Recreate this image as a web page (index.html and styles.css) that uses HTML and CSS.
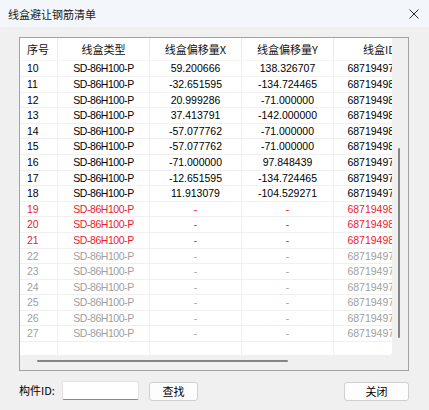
FILE: index.html
```html
<!DOCTYPE html>
<html lang="zh-CN">
<head>
<meta charset="utf-8">
<title>线盒避让钢筋清单</title>
<link rel="stylesheet" href="styles.css">
</head>
<body>
<div class="window">
  <div class="titlebar">
    <span class="title">线盒避让钢筋清单</span>
    <svg class="close" width="10" height="10" viewBox="0 0 10 10"><path d="M0.5 0.5 L9.5 9.5 M9.5 0.5 L0.5 9.5" stroke="#2b2b2b" stroke-width="1" fill="none"/></svg>
  </div>
  <div class="main">
    <div class="frame">
      <div class="data">
        <div class="row head">
          <div class="c left">序号</div><div class="c">线盒类型</div><div class="c">线盒偏移量X</div><div class="c">线盒偏移量Y</div><div class="c">线盒ID</div>
        </div>
        <div class="row"><div class="c left">10</div><div class="c t">SD-86H100-P</div><div class="c">59.200666</div><div class="c">138.326707</div><div class="c">68719497812</div></div>
        <div class="row"><div class="c left">11</div><div class="c t">SD-86H100-P</div><div class="c">-32.651595</div><div class="c">-134.724465</div><div class="c">68719498012</div></div>
        <div class="row"><div class="c left">12</div><div class="c t">SD-86H100-P</div><div class="c">20.999286</div><div class="c">-71.000000</div><div class="c">68719498134</div></div>
        <div class="row"><div class="c left">13</div><div class="c t">SD-86H100-P</div><div class="c">37.413791</div><div class="c">-142.000000</div><div class="c">68719498256</div></div>
        <div class="row"><div class="c left">14</div><div class="c t">SD-86H100-P</div><div class="c">-57.077762</div><div class="c">-71.000000</div><div class="c">68719498378</div></div>
        <div class="row"><div class="c left">15</div><div class="c t">SD-86H100-P</div><div class="c">-57.077762</div><div class="c">-71.000000</div><div class="c">68719498390</div></div>
        <div class="row"><div class="c left">16</div><div class="c t">SD-86H100-P</div><div class="c">-71.000000</div><div class="c">97.848439</div><div class="c">68719497701</div></div>
        <div class="row"><div class="c left">17</div><div class="c t">SD-86H100-P</div><div class="c">-12.651595</div><div class="c">-134.724465</div><div class="c">68719497723</div></div>
        <div class="row"><div class="c left">18</div><div class="c t">SD-86H100-P</div><div class="c">11.913079</div><div class="c">-104.529271</div><div class="c">68719497745</div></div>
        <div class="row red"><div class="c left">19</div><div class="c t">SD-86H100-P</div><div class="c">-</div><div class="c">-</div><div class="c">68719498512</div></div>
        <div class="row red"><div class="c left">20</div><div class="c t">SD-86H100-P</div><div class="c">-</div><div class="c">-</div><div class="c">68719498534</div></div>
        <div class="row red"><div class="c left">21</div><div class="c t">SD-86H100-P</div><div class="c">-</div><div class="c">-</div><div class="c">68719498556</div></div>
        <div class="row grey"><div class="c left">22</div><div class="c t">SD-86H100-P</div><div class="c">-</div><div class="c">-</div><div class="c">68719497912</div></div>
        <div class="row grey"><div class="c left">23</div><div class="c t">SD-86H100-P</div><div class="c">-</div><div class="c">-</div><div class="c">68719497934</div></div>
        <div class="row grey"><div class="c left">24</div><div class="c t">SD-86H100-P</div><div class="c">-</div><div class="c">-</div><div class="c">68719497956</div></div>
        <div class="row grey"><div class="c left">25</div><div class="c t">SD-86H100-P</div><div class="c">-</div><div class="c">-</div><div class="c">68719497978</div></div>
        <div class="row grey"><div class="c left">26</div><div class="c t">SD-86H100-P</div><div class="c">-</div><div class="c">-</div><div class="c">68719497990</div></div>
        <div class="row grey"><div class="c left">27</div><div class="c t">SD-86H100-P</div><div class="c">-</div><div class="c">-</div><div class="c">68719497999</div></div>
        <div class="row filler"><div class="c"></div><div class="c"></div><div class="c"></div><div class="c"></div><div class="c"></div></div>
      </div>
      <div class="vscroll"><div class="vthumb"></div></div>
      <div class="hscroll"><div class="hthumb"></div></div>
      <div class="corner"></div>
    </div>
    <div class="bottom">
      <span class="label">构件ID:</span>
      <div class="input"></div>
      <button class="btn find">查找</button>
      <div class="spacer"></div>
      <button class="btn closebtn">关闭</button>
    </div>
  </div>
</div>
</body>
</html>
```

FILE: styles.css
```css
html, body {
  margin: 0;
  padding: 0;
}
body {
  width: 429px;
  height: 410px;
  overflow: hidden;
  background: #f0f0f0;
  font-family: "Noto Sans CJK SC", "Liberation Sans", sans-serif;
  color: #000;
}
.window {
  width: 429px;
  height: 410px;
  display: flex;
  flex-direction: column;
}
.titlebar {
  height: 27px;
  flex: none;
  background: #f3f6fa;
  display: flex;
  align-items: center;
  padding: 0 10px 0 8px;
}
.title {
  font-size: 11px;
  color: #1a1a1a;
  flex: 1;
  line-height: 14px;
}
.close {
  display: block;
}
.main {
  padding: 10px 20px 0 19px;
  display: flex;
  flex-direction: column;
}
.frame {
  width: 390px;
  height: 334px;
  box-sizing: border-box;
  border: 1px solid #a3a3a3;
  display: grid;
  grid-template-columns: 372px 16px;
  grid-template-rows: 317px 15px;
  background: #f0f0f0;
}
.data {
  background: #fff;
  overflow: hidden;
  display: flex;
  flex-direction: column;
  border-bottom-right-radius: 3px;
}
.row {
  display: grid;
  grid-template-columns: 38px 92px 92px 92px 92px;
  width: 406px;
  height: 15.6px;
  flex: none;
  box-sizing: border-box;
  border-bottom: 1px solid #f0f0f0;
  font-family: "Liberation Sans", Arial, sans-serif;
  font-size: 10.5px;
  line-height: 15px;
}
.row.head {
  height: 23.4px;
  font-family: "Noto Sans CJK SC", sans-serif;
  font-size: 11px;
  line-height: 22px;
  color: #111;
  border-bottom: 1px solid #f4f4f4;
}
.row.filler {
  flex: 1;
  height: auto;
  border-bottom: none;
}
.c {
  border-right: 1px solid #f0f0f0;
  text-align: center;
  white-space: nowrap;
  overflow: hidden;
}
.c.t {
  letter-spacing: -0.45px;
}
.head .c {
  border-right-color: #e8e8e8;
}
.c.left {
  text-align: left;
  padding-left: 7px;
}
.red {
  color: #ec1b2e;
}
.grey {
  color: #a0a0a0;
}
.vscroll {
  position: relative;
  background: #f0f0f0;
}
.vthumb {
  position: absolute;
  left: 6px;
  top: 110px;
  width: 2px;
  height: 190px;
  border-radius: 1px;
  background: #858585;
}
.hscroll {
  position: relative;
  background: #f0f0f0;
}
.hthumb {
  position: absolute;
  left: 17px;
  top: 5px;
  width: 251px;
  height: 2px;
  border-radius: 1px;
  background: #858585;
}
.corner {
  background: #f0f0f0;
}
.bottom {
  display: flex;
  align-items: center;
  margin-top: 9px;
  height: 20px;
}
.label {
  font-size: 11px;
  width: 43px;
  flex: none;
  color: #000;
}
.input {
  width: 77px;
  height: 19px;
  box-sizing: border-box;
  background: #fff;
  border: 1px solid #e3e3e3;
  border-bottom-color: #8a8a8a;
  border-radius: 2px;
  flex: none;
}
.btn {
  height: 19px;
  margin-top: 2px;
  box-sizing: border-box;
  background: #fdfdfd;
  border: 1px solid #d0d0d0;
  border-radius: 3px;
  font-family: "Noto Sans CJK SC", sans-serif;
  font-size: 11px;
  line-height: 16px;
  padding: 0;
  color: #000;
  flex: none;
}
.find {
  width: 49px;
  margin-left: 10px;
}
.spacer {
  flex: 1;
}
.closebtn {
  width: 65px;
  margin-right: 0;
}
```
